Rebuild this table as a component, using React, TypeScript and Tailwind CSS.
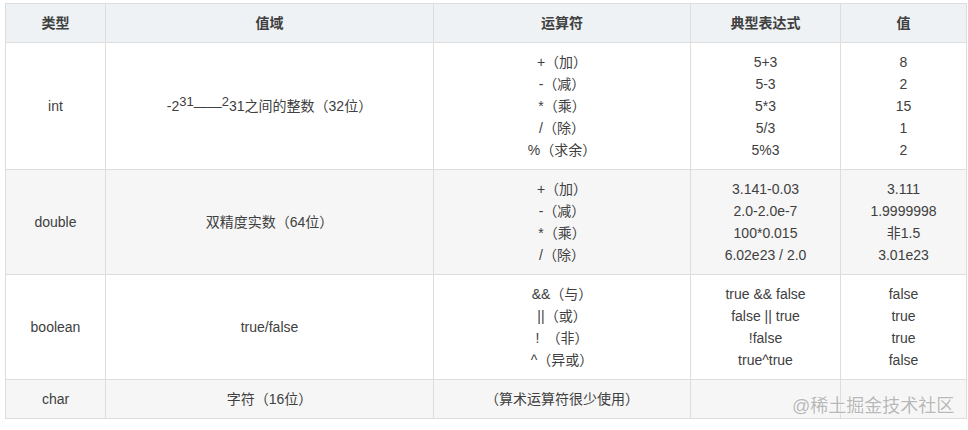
import React from "react";

type Row = {
  type: string;
  range: React.ReactNode;
  ops: string[];
  exprs: string[];
  vals: string[];
  bg: string;
};

const rows: Row[] = [
  {
    type: "int",
    range: (
      <span>
        -2<sup className="text-[13px] align-baseline top-[-5px] leading-none">31</sup>——<sup className="text-[13px] align-baseline top-[-5px] leading-none">2</sup>31之间的整数（32位）
      </span>
    ),
    ops: ["+（加）", "-（减）", "*（乘）", "/（除）", "%（求余）"],
    exprs: ["5+3", "5-3", "5*3", "5/3", "5%3"],
    vals: ["8", "2", "15", "1", "2"],
    bg: "bg-white",
  },
  {
    type: "double",
    range: "双精度实数（64位）",
    ops: ["+（加）", "-（减）", "*（乘）", "/（除）"],
    exprs: ["3.141-0.03", "2.0-2.0e-7", "100*0.015", "6.02e23 / 2.0"],
    vals: ["3.111", "1.9999998", "非1.5", "3.01e23"],
    bg: "bg-[#f6f6f6]",
  },
  {
    type: "boolean",
    range: "true/false",
    ops: ["&&（与）", "||（或）", "!　（非）", "^（异或）"],
    exprs: ["true && false", "false || true", "!false", "true^true"],
    vals: ["false", "true", "true", "false"],
    bg: "bg-white",
  },
  {
    type: "char",
    range: "字符（16位）",
    ops: ["（算术运算符很少使用）"],
    exprs: [""],
    vals: [""],
    bg: "bg-[#f6f6f6]",
  },
];

const cell = "border border-[#dddddd] px-2 py-2 text-center align-middle";

function Lines({ items }: { items: string[] }) {
  return (
    <div className="flex flex-col items-center">
      {items.map((t, i) => (
        <div key={i} className="leading-[22px] whitespace-pre h-[22px]">
          {t}
        </div>
      ))}
    </div>
  );
}

export default function App() {
  return (
    <div
      className="relative w-[968px] h-[430px] bg-white text-[14px] text-[#404040]"
      style={{ fontFamily: '"Liberation Sans", Arial, "Noto Sans CJK SC", sans-serif' }}
    >
      <div className="pl-[5px] pt-[3px]">
        <table className="table-fixed border-collapse w-[961px]">
          <colgroup>
            <col className="w-[100px]" />
            <col className="w-[328px]" />
            <col className="w-[257px]" />
            <col className="w-[150px]" />
            <col className="w-[126px]" />
          </colgroup>
          <thead>
            <tr className="bg-[#eef2f4]">
              {["类型", "值域", "运算符", "典型表达式", "值"].map((h) => (
                <th key={h} className={`${cell} font-bold leading-[22px]`}>
                  {h}
                </th>
              ))}
            </tr>
          </thead>
          <tbody>
            {rows.map((r) => (
              <tr key={r.type} className={r.bg}>
                <td className={`${cell} leading-[22px]`}>{r.type}</td>
                <td className={`${cell} leading-[22px]`}>{r.range}</td>
                <td className={cell}>
                  <Lines items={r.ops} />
                </td>
                <td className={cell}>
                  <Lines items={r.exprs} />
                </td>
                <td className={cell}>
                  <Lines items={r.vals} />
                </td>
              </tr>
            ))}
          </tbody>
        </table>
      </div>
      <div
        className="absolute left-[792px] top-[395px] text-[18px] leading-[22px] text-[#b8b8b8]"
        style={{ textShadow: "0 0 2px #ffffff, 0 0 1px #ffffff" }}
      >
        @稀土掘金技术社区
      </div>
    </div>
  );
}
